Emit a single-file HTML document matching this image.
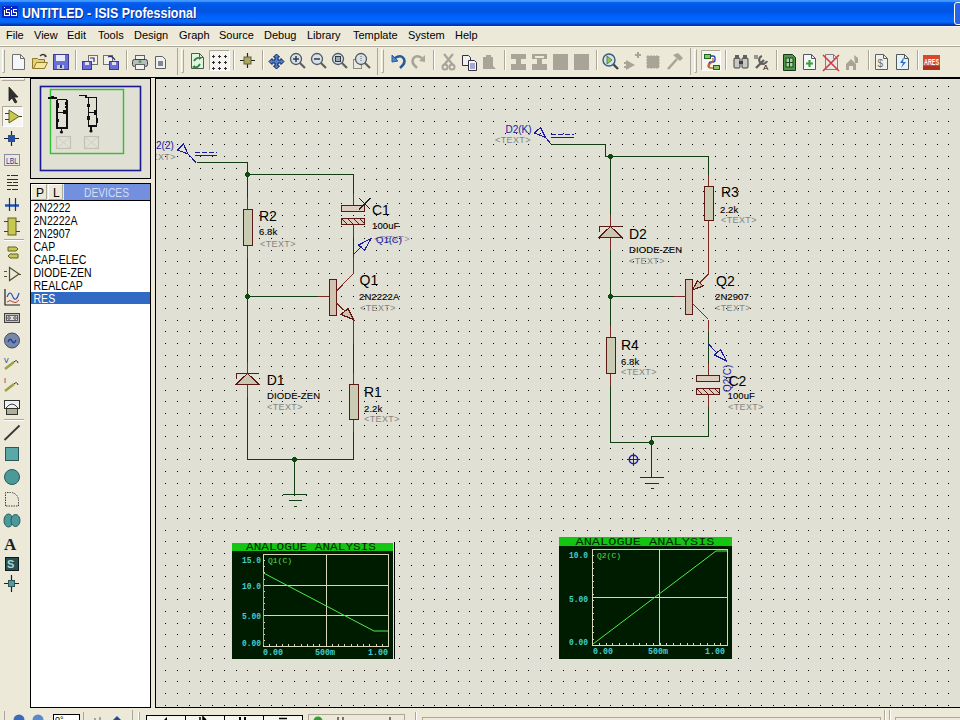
<!DOCTYPE html>
<html><head><meta charset="utf-8">
<style>
html,body{margin:0;padding:0;}
body{width:960px;height:720px;overflow:hidden;position:relative;background:#ECE9D8;font-family:"Liberation Sans",sans-serif;}
.a{position:absolute;}
svg{position:absolute;left:0;top:0;}
.mi{position:absolute;top:29px;font-size:11px;color:#000;line-height:13px;white-space:nowrap;}
</style></head><body>

<div class="a" style="left:0;top:0;width:960px;height:26px;background:linear-gradient(#4AA0FF 0px,#3A8CFF 1.5px,#0A62F0 2.5px,#0058E8 5px,#0054E2 11px,#005EF6 15px,#0066FF 19px,#0A68F6 22px,#0050D8 23.5px,#0034B0 25px,#0030A8 26px);"></div><div class="a" style="left:0;top:26px;width:960px;height:1px;background:#F4F6FA;"></div>
<svg width="20" height="20" style="left:0;top:0;"><rect x="2" y="6" width="16" height="12" fill="#1024C0"/><path d="M4.5 7 v1.2 M4.5 9.5 V15.5 H9.5 V12.5 H6.5 V9.5 H10 M11.5 7 v1.2 M11.5 9.5 V15.5 H16.5 V12.5 H13.5 V9.5 H17" fill="none" stroke="#FFFFFF" stroke-width="1" shape-rendering="crispEdges"/></svg>
<div class="a" style="left:22px;top:5px;font:bold 14px/17px 'Liberation Sans', sans-serif;color:#fff;white-space:nowrap;text-shadow:1px 1px 0 #0A2A8A;transform:scaleX(0.89);transform-origin:0 0;">UNTITLED - ISIS Professional</div>
<div class="a" style="left:954px;top:2px;width:10px;height:21px;border:1px solid #fff;border-radius:3px;background:#2A63E8;"></div>
<div class="mi" style="left:6px;">File</div>
<div class="mi" style="left:34px;">View</div>
<div class="mi" style="left:67px;">Edit</div>
<div class="mi" style="left:98px;">Tools</div>
<div class="mi" style="left:134px;">Design</div>
<div class="mi" style="left:179px;">Graph</div>
<div class="mi" style="left:219px;">Source</div>
<div class="mi" style="left:264px;">Debug</div>
<div class="mi" style="left:307px;">Library</div>
<div class="mi" style="left:353px;">Template</div>
<div class="mi" style="left:408px;">System</div>
<div class="mi" style="left:455px;">Help</div>
<div class="a" style="left:0;top:45px;width:960px;height:1px;background:#fff;"></div>
<div class="a" style="left:0;top:46px;width:960px;height:1px;background:#ACA899;"></div>
<div class="a" style="left:155px;top:78px;width:805px;height:630px;background:#E0E0D4;"></div>
<div class="a" style="left:30px;top:183px;width:119px;height:523px;background:#fff;border:1px solid #000;"></div>
<div class="a" style="left:30px;top:78px;width:119px;height:99px;background:#E0E0D4;border:1px solid #000;"></div>
<svg width="960" height="720" viewBox="0 0 960 720" shape-rendering="crispEdges">
<defs><path id="dr" d="M165 0.5h1m11 0h1m11 0h1m10 0h1m11 0h1m11 0h1m11 0h1m10 0h1m11 0h1m11 0h1m10 0h1m11 0h1m11 0h1m11 0h1m10 0h1m11 0h1m11 0h1m10 0h1m11 0h1m10 0h1m11 0h1m11 0h1m11 0h1m10 0h1m11 0h1m11 0h1m10 0h1m11 0h1m11 0h1m11 0h1m10 0h1m11 0h1m11 0h1m10 0h1m11 0h1m11 0h1m11 0h1m11 0h1m10 0h1m11 0h1m10 0h1m11 0h1m11 0h1m10 0h1m11 0h1m11 0h1m10 0h1m11 0h1m10 0h1m11 0h1m11 0h1m10 0h1m11 0h1m10 0h1m11 0h1m11 0h1m11 0h1m11 0h1m10 0h1m11 0h1m11 0h1m11 0h1m10 0h1m11 0h1m10 0h1m11 0h1m11 0h1m10 0h1" stroke="#000" stroke-width="1"/><clipPath id="sc"><rect x="156" y="79" width="804" height="628"/></clipPath></defs>
<use href="#dr" y="86"/>
<use href="#dr" y="98"/>
<use href="#dr" y="109"/>
<use href="#dr" y="121"/>
<use href="#dr" y="133"/>
<use href="#dr" y="144"/>
<use href="#dr" y="156"/>
<use href="#dr" y="168"/>
<use href="#dr" y="179"/>
<use href="#dr" y="191"/>
<use href="#dr" y="203"/>
<use href="#dr" y="215"/>
<use href="#dr" y="226"/>
<use href="#dr" y="238"/>
<use href="#dr" y="250"/>
<use href="#dr" y="261"/>
<use href="#dr" y="273"/>
<use href="#dr" y="285"/>
<use href="#dr" y="296"/>
<use href="#dr" y="308"/>
<use href="#dr" y="320"/>
<use href="#dr" y="331"/>
<use href="#dr" y="343"/>
<use href="#dr" y="355"/>
<use href="#dr" y="366"/>
<use href="#dr" y="378"/>
<use href="#dr" y="390"/>
<use href="#dr" y="401"/>
<use href="#dr" y="413"/>
<use href="#dr" y="425"/>
<use href="#dr" y="436"/>
<use href="#dr" y="448"/>
<use href="#dr" y="459"/>
<use href="#dr" y="471"/>
<use href="#dr" y="483"/>
<use href="#dr" y="495"/>
<use href="#dr" y="506"/>
<use href="#dr" y="518"/>
<use href="#dr" y="530"/>
<use href="#dr" y="541"/>
<use href="#dr" y="553"/>
<use href="#dr" y="565"/>
<use href="#dr" y="576"/>
<use href="#dr" y="588"/>
<use href="#dr" y="599"/>
<use href="#dr" y="611"/>
<use href="#dr" y="623"/>
<use href="#dr" y="634"/>
<use href="#dr" y="646"/>
<use href="#dr" y="658"/>
<use href="#dr" y="670"/>
<use href="#dr" y="681"/>
<use href="#dr" y="693"/>
<use href="#dr" y="705"/>
<g clip-path="url(#sc)"><g font-family="'Liberation Sans', sans-serif">
<path d="M196.5 162.5 L247.5 162.5 L247.5 197.5" fill="none" stroke="#123C12" stroke-width="1"/>
<path d="M247.5 197.5 L247.5 209.5" fill="none" stroke="#7A2A20" stroke-width="1"/>
<path d="M247.5 245.5 L247.5 257.5" fill="none" stroke="#7A2A20" stroke-width="1"/>
<rect x="243.0" y="209.5" width="9.5" height="36" fill="#C9CBB2" stroke="#5C1812" stroke-width="1"/>
<path d="M247.5 257.5 L247.5 361.5" fill="none" stroke="#123C12" stroke-width="1"/>
<path d="M247.5 361.5 L247.5 373.5" fill="none" stroke="#7A2A20" stroke-width="1"/>
<path d="M247.5 384.5 L247.5 396.5" fill="none" stroke="#7A2A20" stroke-width="1"/>
<polygon points="247.5,373.5 236,384.5 259,384.5" fill="#CAC6B2" stroke="#5C1812" stroke-width="1.2"/>
<path d="M236.5 379 V373.5 H259" fill="none" stroke="#5C1812" stroke-width="1.2"/>
<path d="M247.5 396.5 L247.5 459.5 L353.5 459.5 L353.5 431.5" fill="none" stroke="#123C12" stroke-width="1"/>
<circle cx="247.5" cy="174.5" r="2.6" fill="#0E4A0E"/>
<circle cx="247.5" cy="296.5" r="2.6" fill="#0E4A0E"/>
<circle cx="294.5" cy="459.5" r="2.6" fill="#0E4A0E"/>
<path d="M294.5 459.5 L294.5 494.5" fill="none" stroke="#123C12" stroke-width="1"/>
<path d="M282.5 494.5 L306.5 494.5" fill="none" stroke="#123C12" stroke-width="1"/>
<path d="M288.5 500.5 L301.5 500.5" fill="none" stroke="#123C12" stroke-width="1"/>
<path d="M293.5 506.5 L296.5 506.5" fill="none" stroke="#123C12" stroke-width="1"/>
<path d="M247.5 174.5 L353.5 174.5 L353.5 193.5" fill="none" stroke="#123C12" stroke-width="1"/>
<path d="M353.5 193.5 L353.5 205.5" fill="none" stroke="#7A2A20" stroke-width="1"/>
<path d="M353.5 224.5 L353.5 236.5" fill="none" stroke="#7A2A20" stroke-width="1"/>
<rect x="341.5" y="205.5" width="23" height="6" fill="#DCCDBE" stroke="#5C1812" stroke-width="1"/>
<rect x="341.5" y="218.5" width="23" height="6" fill="#DCCDBE" stroke="#5C1812" stroke-width="1"/>
<line x1="342" y1="219" x2="347" y2="224" stroke="#5C1812" stroke-width="1"/>
<line x1="348" y1="219" x2="353" y2="224" stroke="#5C1812" stroke-width="1"/>
<line x1="354" y1="219" x2="359" y2="224" stroke="#5C1812" stroke-width="1"/>
<line x1="360" y1="219" x2="365" y2="224" stroke="#5C1812" stroke-width="1"/>
<path d="M353.5 236.5 L353.5 256.5" fill="none" stroke="#123C12" stroke-width="1"/>
<path d="M353.5 256.5 L353.5 273.5" fill="none" stroke="#7A2A20" stroke-width="1"/>
<path d="M247.5 296.5 L317.5 296.5" fill="none" stroke="#123C12" stroke-width="1"/>
<path d="M317.5 296.5 L329.5 296.5" fill="none" stroke="#7A2A20" stroke-width="1"/>
<rect x="329.5" y="279.5" width="7" height="36" fill="#D2C2B0" stroke="#5C1812" stroke-width="1"/>
<line x1="336.5" y1="291" x2="353.5" y2="273.5" stroke="#7A2A20" stroke-width="1"/>
<line x1="336.5" y1="303" x2="353.5" y2="319.5" stroke="#7A2A20" stroke-width="1"/>
<polygon points="341,314.5 348,308.5 353.5,319.5" fill="#D2C2B0" stroke="#5C1812" stroke-width="1.2"/>
<path d="M353.5 319.5 L353.5 343.5" fill="none" stroke="#7A2A20" stroke-width="1"/>
<path d="M353.5 343.5 L353.5 372.5" fill="none" stroke="#123C12" stroke-width="1"/>
<path d="M353.5 372.5 L353.5 384.5" fill="none" stroke="#7A2A20" stroke-width="1"/>
<path d="M353.5 419.5 L353.5 431.5" fill="none" stroke="#7A2A20" stroke-width="1"/>
<rect x="349.0" y="384.5" width="9.5" height="35" fill="#C9CBB2" stroke="#5C1812" stroke-width="1"/>
<line x1="359" y1="198" x2="370.5" y2="209.5" stroke="#202020" stroke-width="1"/>
<line x1="370.5" y1="198" x2="359" y2="209.5" stroke="#202020" stroke-width="1"/>
<line x1="353.5" y1="254.5" x2="362" y2="246" stroke="#1A1AA0" stroke-width="1"/>
<polygon points="358.5,245 371,238.5 364.5,250.5" fill="none" stroke="#1A1AA0" stroke-width="1.1"/>
<polygon points="177.5,150 183.5,144 188,154" fill="none" stroke="#1A1AA0" stroke-width="1.1"/>
<line x1="188" y1="154" x2="196" y2="162.5" stroke="#1A1AA0" stroke-width="1"/>
<line x1="195" y1="152" x2="217" y2="152" stroke="#1A1AA0" stroke-dasharray="5,2" stroke-width="1"/>
<line x1="195" y1="155.5" x2="217" y2="155.5" stroke="#1A1AA0" stroke-width="1.2"/>
<text x="259" y="220.6" font-size="14" fill="#000" >R2</text>
<text x="259" y="234.5" font-size="9.5" fill="#000"  stroke="#000" stroke-width="0.12" letter-spacing="0.1">6.8k</text>
<text x="260" y="246.6" font-size="9" fill="#858585"  letter-spacing="0.4">&lt;TEXT&gt;</text>
<text x="372" y="215.2" font-size="14" fill="#000" >C1</text>
<text x="372" y="229.3" font-size="9.5" fill="#000"  stroke="#000" stroke-width="0.12" letter-spacing="0.1">100uF</text>
<text x="374" y="242.2" font-size="9" fill="#9090B0"  letter-spacing="0.4">&lt;TEXT&gt;</text>
<text x="376" y="242.5" font-size="9.5" fill="#1A1AA0" >Q1(C)</text>
<text x="359.5" y="285.3" font-size="14" fill="#000" >Q1</text>
<text x="359" y="299.9" font-size="9.5" fill="#000"  stroke="#000" stroke-width="0.12" letter-spacing="0.1">2N2222A</text>
<text x="360" y="311.2" font-size="9" fill="#858585"  letter-spacing="0.4">&lt;TEXT&gt;</text>
<text x="266.7" y="385.0" font-size="14" fill="#000" >D1</text>
<text x="267" y="399.0" font-size="9.5" fill="#000"  stroke="#000" stroke-width="0.12" letter-spacing="0.1">DIODE-ZEN</text>
<text x="267" y="410.2" font-size="9" fill="#858585"  letter-spacing="0.4">&lt;TEXT&gt;</text>
<text x="364" y="396.9" font-size="14" fill="#000" >R1</text>
<text x="364" y="411.5" font-size="9.5" fill="#000"  stroke="#000" stroke-width="0.12" letter-spacing="0.1">2.2k</text>
<text x="364" y="421.6" font-size="9" fill="#858585"  letter-spacing="0.4">&lt;TEXT&gt;</text>
<text x="156" y="149.4" font-size="10" fill="#1A1AA0" >2(2)</text>
<text x="140" y="159.9" font-size="9" fill="#858585"  letter-spacing="0.4">&lt;TEXT&gt;</text>
<path d="M551.5 144.5 L605.5 144.5 L605.5 156.5 L708.5 156.5 L708.5 174.5" fill="none" stroke="#123C12" stroke-width="1"/>
<path d="M708.5 174.5 L708.5 186.5" fill="none" stroke="#7A2A20" stroke-width="1"/>
<path d="M708.5 220.5 L708.5 232.5" fill="none" stroke="#7A2A20" stroke-width="1"/>
<rect x="704.0" y="186.5" width="9.5" height="34" fill="#C9CBB2" stroke="#5C1812" stroke-width="1"/>
<path d="M708.5 232.5 L708.5 274.5" fill="none" stroke="#7A2A20" stroke-width="1"/>
<line x1="708.5" y1="274" x2="692.5" y2="290" stroke="#7A2A20" stroke-width="1"/>
<polygon points="692.5,290 697.5,280.5 703,286" fill="#D2C2B0" stroke="#5C1812" stroke-width="1.2"/>
<rect x="685.5" y="279.5" width="7" height="35" fill="#D2C2B0" stroke="#5C1812" stroke-width="1"/>
<line x1="692.5" y1="303.5" x2="708.5" y2="319.5" stroke="#7A2A20" stroke-width="1"/>
<path d="M708.5 319.5 L708.5 331.5" fill="none" stroke="#7A2A20" stroke-width="1"/>
<path d="M708.5 331.5 L708.5 363.5" fill="none" stroke="#123C12" stroke-width="1"/>
<path d="M708.5 363.5 L708.5 375.5" fill="none" stroke="#7A2A20" stroke-width="1"/>
<path d="M708.5 394.5 L708.5 406.5" fill="none" stroke="#7A2A20" stroke-width="1"/>
<rect x="696.5" y="375.5" width="23" height="6" fill="#DCCDBE" stroke="#5C1812" stroke-width="1"/>
<rect x="696.5" y="388.5" width="23" height="6" fill="#DCCDBE" stroke="#5C1812" stroke-width="1"/>
<line x1="697" y1="389" x2="702" y2="394" stroke="#5C1812" stroke-width="1"/>
<line x1="703" y1="389" x2="708" y2="394" stroke="#5C1812" stroke-width="1"/>
<line x1="709" y1="389" x2="714" y2="394" stroke="#5C1812" stroke-width="1"/>
<line x1="715" y1="389" x2="720" y2="394" stroke="#5C1812" stroke-width="1"/>
<path d="M708.5 406.5 L708.5 436.5 L651.5 436.5 L651.5 442.5" fill="none" stroke="#123C12" stroke-width="1"/>
<path d="M610.5 156.5 L610.5 214.5" fill="none" stroke="#123C12" stroke-width="1"/>
<path d="M610.5 214.5 L610.5 226.5" fill="none" stroke="#7A2A20" stroke-width="1"/>
<path d="M610.5 237.5 L610.5 249.5" fill="none" stroke="#7A2A20" stroke-width="1"/>
<polygon points="610.5,226.5 599,237.5 622,237.5" fill="#CAC6B2" stroke="#5C1812" stroke-width="1.2"/>
<path d="M599.5 232 V226.5 H622" fill="none" stroke="#5C1812" stroke-width="1.2"/>
<path d="M610.5 249.5 L610.5 325.5" fill="none" stroke="#123C12" stroke-width="1"/>
<path d="M610.5 296.5 L673.5 296.5" fill="none" stroke="#123C12" stroke-width="1"/>
<path d="M673.5 296.5 L685.5 296.5" fill="none" stroke="#7A2A20" stroke-width="1"/>
<path d="M610.5 325.5 L610.5 337.5" fill="none" stroke="#7A2A20" stroke-width="1"/>
<path d="M610.5 373.5 L610.5 385.5" fill="none" stroke="#7A2A20" stroke-width="1"/>
<rect x="606.0" y="337.5" width="9.5" height="36" fill="#C9CBB2" stroke="#5C1812" stroke-width="1"/>
<path d="M610.5 385.5 L610.5 442.5 L651.5 442.5" fill="none" stroke="#123C12" stroke-width="1"/>
<circle cx="610.5" cy="156.5" r="2.6" fill="#0E4A0E"/>
<circle cx="610.5" cy="296.5" r="2.6" fill="#0E4A0E"/>
<circle cx="651.5" cy="442.5" r="2.6" fill="#0E4A0E"/>
<path d="M651.5 442.5 L651.5 477.5" fill="none" stroke="#123C12" stroke-width="1"/>
<path d="M639.5 477.5 L663.5 477.5" fill="none" stroke="#123C12" stroke-width="1"/>
<path d="M645.5 483.5 L658.5 483.5" fill="none" stroke="#123C12" stroke-width="1"/>
<path d="M650.5 488.5 L653.5 488.5" fill="none" stroke="#123C12" stroke-width="1"/>
<circle cx="633.5" cy="459.5" r="4.2" fill="none" stroke="#1A1AA0" stroke-width="1.5" shape-rendering="auto"/>
<line x1="627" y1="459.5" x2="640" y2="459.5" stroke="#1A1AA0" stroke-width="1"/>
<line x1="633.5" y1="453" x2="633.5" y2="466" stroke="#1A1AA0" stroke-width="1"/>
<polygon points="534.5,133 540.5,127.5 545.5,137.5" fill="none" stroke="#1A1AA0" stroke-width="1.1"/>
<line x1="545.5" y1="137.5" x2="551.5" y2="144.5" stroke="#1A1AA0" stroke-width="1"/>
<line x1="551" y1="134.5" x2="574" y2="134.5" stroke="#1A1AA0" stroke-dasharray="5,2" stroke-width="1"/>
<line x1="551" y1="137.5" x2="574" y2="137.5" stroke="#1A1AA0" stroke-width="1.2"/>
<line x1="708.5" y1="344" x2="716" y2="352" stroke="#1A1AA0" stroke-width="1"/>
<polygon points="714.5,355 720.5,349.5 726.5,361" fill="none" stroke="#1A1AA0" stroke-width="1.1"/>
<text transform="translate(731,392) rotate(-90)" font-size="10" fill="#1A1AA0">Q2(C)</text>
<text x="505.5" y="132.5" font-size="10" fill="#1A1AA0" >D2(K)</text>
<text x="495" y="142.9" font-size="9" fill="#858585"  letter-spacing="0.4">&lt;TEXT&gt;</text>
<text x="721" y="197.1" font-size="14" fill="#000" >R3</text>
<text x="720" y="212.5" font-size="9.5" fill="#000"  stroke="#000" stroke-width="0.12" letter-spacing="0.1">2.2k</text>
<text x="721" y="223.4" font-size="9" fill="#858585"  letter-spacing="0.4">&lt;TEXT&gt;</text>
<text x="629" y="238.6" font-size="14" fill="#000" >D2</text>
<text x="629" y="252.8" font-size="9.5" fill="#000"  stroke="#000" stroke-width="0.12" letter-spacing="0.1">DIODE-ZEN</text>
<text x="629" y="264.0" font-size="9" fill="#858585"  letter-spacing="0.4">&lt;TEXT&gt;</text>
<text x="716" y="285.6" font-size="14" fill="#000" >Q2</text>
<text x="715" y="300.1" font-size="9.5" fill="#000"  stroke="#000" stroke-width="0.12" letter-spacing="0.1">2N2907</text>
<text x="715" y="310.7" font-size="9" fill="#858585"  letter-spacing="0.4">&lt;TEXT&gt;</text>
<text x="621" y="349.6" font-size="14" fill="#000" >R4</text>
<text x="621" y="364.5" font-size="9.5" fill="#000"  stroke="#000" stroke-width="0.12" letter-spacing="0.1">6.8k</text>
<text x="621" y="375.2" font-size="9" fill="#858585"  letter-spacing="0.4">&lt;TEXT&gt;</text>
<text x="728.5" y="385.6" font-size="14" fill="#000" >C2</text>
<text x="727.5" y="399.2" font-size="9.5" fill="#000"  stroke="#000" stroke-width="0.12" letter-spacing="0.1">100uF</text>
<text x="728" y="409.8" font-size="9" fill="#858585"  letter-spacing="0.4">&lt;TEXT&gt;</text>
</g>
<rect x="232" y="536" width="164" height="7" fill="#E0E0D4"/>
<rect x="232" y="543" width="161" height="116" fill="#001C00"/>
<rect x="232" y="543" width="161" height="8" fill="#12C612"/>
<line x1="394.5" y1="542" x2="394.5" y2="659" stroke="#000" stroke-width="1.5"/>
<rect x="263.5" y="554.5" width="125" height="92" fill="none" stroke="#D8D8B8" stroke-width="1"/>
<line x1="263" y1="585.5" x2="388" y2="585.5" stroke="#D8D8B8" stroke-width="1"/>
<line x1="263" y1="615.5" x2="388" y2="615.5" stroke="#D8D8B8" stroke-width="1"/>
<line x1="326.5" y1="554" x2="326.5" y2="646" stroke="#D8D8B8" stroke-width="1"/>
<line x1="263.5" y1="644" x2="263.5" y2="646" stroke="#D8D8B8" stroke-width="1"/>
<line x1="269.8" y1="644" x2="269.8" y2="646" stroke="#D8D8B8" stroke-width="1"/>
<line x1="276.0" y1="644" x2="276.0" y2="646" stroke="#D8D8B8" stroke-width="1"/>
<line x1="282.2" y1="644" x2="282.2" y2="646" stroke="#D8D8B8" stroke-width="1"/>
<line x1="288.5" y1="644" x2="288.5" y2="646" stroke="#D8D8B8" stroke-width="1"/>
<line x1="294.8" y1="644" x2="294.8" y2="646" stroke="#D8D8B8" stroke-width="1"/>
<line x1="301.0" y1="644" x2="301.0" y2="646" stroke="#D8D8B8" stroke-width="1"/>
<line x1="307.2" y1="644" x2="307.2" y2="646" stroke="#D8D8B8" stroke-width="1"/>
<line x1="313.5" y1="644" x2="313.5" y2="646" stroke="#D8D8B8" stroke-width="1"/>
<line x1="319.8" y1="644" x2="319.8" y2="646" stroke="#D8D8B8" stroke-width="1"/>
<line x1="326.0" y1="644" x2="326.0" y2="646" stroke="#D8D8B8" stroke-width="1"/>
<line x1="332.2" y1="644" x2="332.2" y2="646" stroke="#D8D8B8" stroke-width="1"/>
<line x1="338.5" y1="644" x2="338.5" y2="646" stroke="#D8D8B8" stroke-width="1"/>
<line x1="344.8" y1="644" x2="344.8" y2="646" stroke="#D8D8B8" stroke-width="1"/>
<line x1="351.0" y1="644" x2="351.0" y2="646" stroke="#D8D8B8" stroke-width="1"/>
<line x1="357.2" y1="644" x2="357.2" y2="646" stroke="#D8D8B8" stroke-width="1"/>
<line x1="363.5" y1="644" x2="363.5" y2="646" stroke="#D8D8B8" stroke-width="1"/>
<line x1="369.8" y1="644" x2="369.8" y2="646" stroke="#D8D8B8" stroke-width="1"/>
<line x1="376.0" y1="644" x2="376.0" y2="646" stroke="#D8D8B8" stroke-width="1"/>
<line x1="382.2" y1="644" x2="382.2" y2="646" stroke="#D8D8B8" stroke-width="1"/>
<line x1="388.5" y1="644" x2="388.5" y2="646" stroke="#D8D8B8" stroke-width="1"/>
<line x1="263" y1="554.5" x2="265" y2="554.5" stroke="#D8D8B8" stroke-width="1"/>
<line x1="263" y1="560.6" x2="265" y2="560.6" stroke="#D8D8B8" stroke-width="1"/>
<line x1="263" y1="566.8" x2="265" y2="566.8" stroke="#D8D8B8" stroke-width="1"/>
<line x1="263" y1="572.9" x2="265" y2="572.9" stroke="#D8D8B8" stroke-width="1"/>
<line x1="263" y1="579.0" x2="265" y2="579.0" stroke="#D8D8B8" stroke-width="1"/>
<line x1="263" y1="585.2" x2="265" y2="585.2" stroke="#D8D8B8" stroke-width="1"/>
<line x1="263" y1="591.3" x2="265" y2="591.3" stroke="#D8D8B8" stroke-width="1"/>
<line x1="263" y1="597.4" x2="265" y2="597.4" stroke="#D8D8B8" stroke-width="1"/>
<line x1="263" y1="603.6" x2="265" y2="603.6" stroke="#D8D8B8" stroke-width="1"/>
<line x1="263" y1="609.7" x2="265" y2="609.7" stroke="#D8D8B8" stroke-width="1"/>
<line x1="263" y1="615.8" x2="265" y2="615.8" stroke="#D8D8B8" stroke-width="1"/>
<line x1="263" y1="622.0" x2="265" y2="622.0" stroke="#D8D8B8" stroke-width="1"/>
<line x1="263" y1="628.1" x2="265" y2="628.1" stroke="#D8D8B8" stroke-width="1"/>
<line x1="263" y1="634.2" x2="265" y2="634.2" stroke="#D8D8B8" stroke-width="1"/>
<line x1="263" y1="640.4" x2="265" y2="640.4" stroke="#D8D8B8" stroke-width="1"/>
<line x1="263" y1="646.5" x2="265" y2="646.5" stroke="#D8D8B8" stroke-width="1"/>
<rect x="232" y="543" width="161" height="8" fill="#12C612"/>
<text x="246" y="550" font-family="'Liberation Mono', monospace" font-size="10" fill="#002800" textLength="130" lengthAdjust="spacingAndGlyphs">ANALOGUE ANALYSIS</text>
<text x="242" y="563" font-family="'Liberation Mono', monospace" font-size="9" font-weight="bold" fill="#40D0D0" textLength="19" lengthAdjust="spacingAndGlyphs">15.0</text>
<text x="242" y="589" font-family="'Liberation Mono', monospace" font-size="9" font-weight="bold" fill="#40D0D0" textLength="19" lengthAdjust="spacingAndGlyphs">10.0</text>
<text x="242" y="619" font-family="'Liberation Mono', monospace" font-size="9" font-weight="bold" fill="#40D0D0" textLength="19" lengthAdjust="spacingAndGlyphs">5.00</text>
<text x="242" y="646" font-family="'Liberation Mono', monospace" font-size="9" font-weight="bold" fill="#40D0D0" textLength="19" lengthAdjust="spacingAndGlyphs">0.00</text>
<text x="263" y="655" font-family="'Liberation Mono', monospace" font-size="9" font-weight="bold" fill="#40D0D0" textLength="20" lengthAdjust="spacingAndGlyphs">0.00</text>
<text x="315" y="655" font-family="'Liberation Mono', monospace" font-size="9" font-weight="bold" fill="#40D0D0" textLength="20" lengthAdjust="spacingAndGlyphs">500m</text>
<text x="368" y="655" font-family="'Liberation Mono', monospace" font-size="9" font-weight="bold" fill="#40D0D0" textLength="20" lengthAdjust="spacingAndGlyphs">1.00</text>
<text x="268" y="563" font-family="'Liberation Mono', monospace" font-size="8" fill="#50E050" textLength="24" lengthAdjust="spacingAndGlyphs">Q1(C)</text>
<polyline points="263.5,645 263.5,573 374,631 388,631" fill="none" stroke="#48F048" stroke-width="1" shape-rendering="auto"/>
<rect x="559" y="537" width="173" height="122" fill="#001C00"/>
<rect x="559" y="537" width="173" height="8" fill="#12C612"/>
<rect x="592.5" y="549.5" width="135" height="96" fill="none" stroke="#D8D8B8" stroke-width="1"/>
<line x1="592" y1="597.5" x2="727" y2="597.5" stroke="#D8D8B8" stroke-width="1"/>
<line x1="659.5" y1="549" x2="659.5" y2="645" stroke="#D8D8B8" stroke-width="1"/>
<line x1="592.5" y1="643" x2="592.5" y2="645" stroke="#D8D8B8" stroke-width="1"/>
<line x1="599.2" y1="643" x2="599.2" y2="645" stroke="#D8D8B8" stroke-width="1"/>
<line x1="606.0" y1="643" x2="606.0" y2="645" stroke="#D8D8B8" stroke-width="1"/>
<line x1="612.8" y1="643" x2="612.8" y2="645" stroke="#D8D8B8" stroke-width="1"/>
<line x1="619.5" y1="643" x2="619.5" y2="645" stroke="#D8D8B8" stroke-width="1"/>
<line x1="626.2" y1="643" x2="626.2" y2="645" stroke="#D8D8B8" stroke-width="1"/>
<line x1="633.0" y1="643" x2="633.0" y2="645" stroke="#D8D8B8" stroke-width="1"/>
<line x1="639.8" y1="643" x2="639.8" y2="645" stroke="#D8D8B8" stroke-width="1"/>
<line x1="646.5" y1="643" x2="646.5" y2="645" stroke="#D8D8B8" stroke-width="1"/>
<line x1="653.2" y1="643" x2="653.2" y2="645" stroke="#D8D8B8" stroke-width="1"/>
<line x1="660.0" y1="643" x2="660.0" y2="645" stroke="#D8D8B8" stroke-width="1"/>
<line x1="666.8" y1="643" x2="666.8" y2="645" stroke="#D8D8B8" stroke-width="1"/>
<line x1="673.5" y1="643" x2="673.5" y2="645" stroke="#D8D8B8" stroke-width="1"/>
<line x1="680.2" y1="643" x2="680.2" y2="645" stroke="#D8D8B8" stroke-width="1"/>
<line x1="687.0" y1="643" x2="687.0" y2="645" stroke="#D8D8B8" stroke-width="1"/>
<line x1="693.8" y1="643" x2="693.8" y2="645" stroke="#D8D8B8" stroke-width="1"/>
<line x1="700.5" y1="643" x2="700.5" y2="645" stroke="#D8D8B8" stroke-width="1"/>
<line x1="707.2" y1="643" x2="707.2" y2="645" stroke="#D8D8B8" stroke-width="1"/>
<line x1="714.0" y1="643" x2="714.0" y2="645" stroke="#D8D8B8" stroke-width="1"/>
<line x1="720.8" y1="643" x2="720.8" y2="645" stroke="#D8D8B8" stroke-width="1"/>
<line x1="727.5" y1="643" x2="727.5" y2="645" stroke="#D8D8B8" stroke-width="1"/>
<line x1="592" y1="549.5" x2="594" y2="549.5" stroke="#D8D8B8" stroke-width="1"/>
<line x1="592" y1="555.9" x2="594" y2="555.9" stroke="#D8D8B8" stroke-width="1"/>
<line x1="592" y1="562.3" x2="594" y2="562.3" stroke="#D8D8B8" stroke-width="1"/>
<line x1="592" y1="568.7" x2="594" y2="568.7" stroke="#D8D8B8" stroke-width="1"/>
<line x1="592" y1="575.1" x2="594" y2="575.1" stroke="#D8D8B8" stroke-width="1"/>
<line x1="592" y1="581.5" x2="594" y2="581.5" stroke="#D8D8B8" stroke-width="1"/>
<line x1="592" y1="587.9" x2="594" y2="587.9" stroke="#D8D8B8" stroke-width="1"/>
<line x1="592" y1="594.3" x2="594" y2="594.3" stroke="#D8D8B8" stroke-width="1"/>
<line x1="592" y1="600.7" x2="594" y2="600.7" stroke="#D8D8B8" stroke-width="1"/>
<line x1="592" y1="607.1" x2="594" y2="607.1" stroke="#D8D8B8" stroke-width="1"/>
<line x1="592" y1="613.5" x2="594" y2="613.5" stroke="#D8D8B8" stroke-width="1"/>
<line x1="592" y1="619.9" x2="594" y2="619.9" stroke="#D8D8B8" stroke-width="1"/>
<line x1="592" y1="626.3" x2="594" y2="626.3" stroke="#D8D8B8" stroke-width="1"/>
<line x1="592" y1="632.7" x2="594" y2="632.7" stroke="#D8D8B8" stroke-width="1"/>
<line x1="592" y1="639.1" x2="594" y2="639.1" stroke="#D8D8B8" stroke-width="1"/>
<line x1="592" y1="645.5" x2="594" y2="645.5" stroke="#D8D8B8" stroke-width="1"/>
<rect x="559" y="537" width="173" height="9" fill="#12C612"/>
<text x="575.5" y="545" font-family="'Liberation Mono', monospace" font-size="10" fill="#002800" textLength="139" lengthAdjust="spacingAndGlyphs">ANALOGUE ANALYSIS</text>
<text x="569" y="558" font-family="'Liberation Mono', monospace" font-size="9" font-weight="bold" fill="#40D0D0" textLength="19" lengthAdjust="spacingAndGlyphs">10.0</text>
<text x="569" y="602" font-family="'Liberation Mono', monospace" font-size="9" font-weight="bold" fill="#40D0D0" textLength="19" lengthAdjust="spacingAndGlyphs">5.00</text>
<text x="569" y="645" font-family="'Liberation Mono', monospace" font-size="9" font-weight="bold" fill="#40D0D0" textLength="19" lengthAdjust="spacingAndGlyphs">0.00</text>
<text x="593" y="654" font-family="'Liberation Mono', monospace" font-size="9" font-weight="bold" fill="#40D0D0" textLength="20" lengthAdjust="spacingAndGlyphs">0.00</text>
<text x="648" y="654" font-family="'Liberation Mono', monospace" font-size="9" font-weight="bold" fill="#40D0D0" textLength="20" lengthAdjust="spacingAndGlyphs">500m</text>
<text x="705" y="654" font-family="'Liberation Mono', monospace" font-size="9" font-weight="bold" fill="#40D0D0" textLength="20" lengthAdjust="spacingAndGlyphs">1.00</text>
<text x="597" y="558" font-family="'Liberation Mono', monospace" font-size="8" fill="#50E050" textLength="24" lengthAdjust="spacingAndGlyphs">Q2(C)</text>
<polyline points="593,644 716,551 727,551" fill="none" stroke="#48F048" stroke-width="1" shape-rendering="auto"/></g>
<g shape-rendering="auto"><line x1="0" y1="77.5" x2="960" y2="77.5" stroke="#000" stroke-width="1"/>
<path d="M2.5 72.5 V49.5 H4.5" fill="none" stroke="#FFFFFF" stroke-width="1"/>
<path d="M4.5 49.5 V72.5 H2.5" fill="none" stroke="#ACA899" stroke-width="1"/>
<line x1="75.5" y1="50" x2="75.5" y2="70" stroke="#ACA899" stroke-width="1"/>
<line x1="76.5" y1="50" x2="76.5" y2="70" stroke="#FFFFFF" stroke-width="1"/>
<line x1="126.5" y1="50" x2="126.5" y2="70" stroke="#ACA899" stroke-width="1"/>
<line x1="127.5" y1="50" x2="127.5" y2="70" stroke="#FFFFFF" stroke-width="1"/>
<line x1="233.5" y1="50" x2="233.5" y2="70" stroke="#ACA899" stroke-width="1"/>
<line x1="234.5" y1="50" x2="234.5" y2="70" stroke="#FFFFFF" stroke-width="1"/>
<line x1="262.5" y1="50" x2="262.5" y2="70" stroke="#ACA899" stroke-width="1"/>
<line x1="263.5" y1="50" x2="263.5" y2="70" stroke="#FFFFFF" stroke-width="1"/>
<line x1="433.5" y1="50" x2="433.5" y2="70" stroke="#ACA899" stroke-width="1"/>
<line x1="434.5" y1="50" x2="434.5" y2="70" stroke="#FFFFFF" stroke-width="1"/>
<line x1="504.5" y1="50" x2="504.5" y2="70" stroke="#ACA899" stroke-width="1"/>
<line x1="505.5" y1="50" x2="505.5" y2="70" stroke="#FFFFFF" stroke-width="1"/>
<line x1="596.5" y1="50" x2="596.5" y2="70" stroke="#ACA899" stroke-width="1"/>
<line x1="597.5" y1="50" x2="597.5" y2="70" stroke="#FFFFFF" stroke-width="1"/>
<line x1="725.5" y1="50" x2="725.5" y2="70" stroke="#ACA899" stroke-width="1"/>
<line x1="726.5" y1="50" x2="726.5" y2="70" stroke="#FFFFFF" stroke-width="1"/>
<line x1="776.5" y1="50" x2="776.5" y2="70" stroke="#ACA899" stroke-width="1"/>
<line x1="777.5" y1="50" x2="777.5" y2="70" stroke="#FFFFFF" stroke-width="1"/>
<line x1="868.5" y1="50" x2="868.5" y2="70" stroke="#ACA899" stroke-width="1"/>
<line x1="869.5" y1="50" x2="869.5" y2="70" stroke="#FFFFFF" stroke-width="1"/>
<line x1="917.5" y1="50" x2="917.5" y2="70" stroke="#ACA899" stroke-width="1"/>
<line x1="918.5" y1="50" x2="918.5" y2="70" stroke="#FFFFFF" stroke-width="1"/>
<line x1="177.5" y1="48" x2="177.5" y2="75" stroke="#ACA899" stroke-width="1"/>
<line x1="377.5" y1="48" x2="377.5" y2="75" stroke="#ACA899" stroke-width="1"/>
<line x1="690.5" y1="48" x2="690.5" y2="75" stroke="#ACA899" stroke-width="1"/>
<path d="M181.5 72.5 V49.5 H183.5" fill="none" stroke="#FFFFFF" stroke-width="1"/>
<path d="M183.5 49.5 V72.5 H181.5" fill="none" stroke="#ACA899" stroke-width="1"/>
<path d="M381.5 72.5 V49.5 H383.5" fill="none" stroke="#FFFFFF" stroke-width="1"/>
<path d="M383.5 49.5 V72.5 H381.5" fill="none" stroke="#ACA899" stroke-width="1"/>
<path d="M694.5 72.5 V49.5 H696.5" fill="none" stroke="#FFFFFF" stroke-width="1"/>
<path d="M696.5 49.5 V72.5 H694.5" fill="none" stroke="#ACA899" stroke-width="1"/>
<rect x="209" y="50" width="21" height="21" fill="#F6F5F0"/>
<path d="M209.5 70.5 V50.5 H229.5" fill="none" stroke="#ACA899" stroke-width="1"/>
<path d="M209.5 70.5 H229.5 V50.5" fill="none" stroke="#FFFFFF" stroke-width="1"/>
<rect x="701" y="50" width="20" height="21" fill="#F6F5F0"/>
<path d="M701.5 70.5 V50.5 H720.5" fill="none" stroke="#ACA899" stroke-width="1"/>
<path d="M701.5 70.5 H720.5 V50.5" fill="none" stroke="#FFFFFF" stroke-width="1"/>
<path d="M12.5 54.5 h8 l4 4 v11 h-12 z" fill="#F4F6FA" stroke="#6E6E6E" stroke-width="1"/><path d="M20.5 54.5 v4 h4" fill="none" stroke="#6E6E6E"/>
<path d="M32.5 58.5 h5 l1 1 h6 v9 h-12 z" fill="#E8D070" stroke="#8C7A30"/><path d="M33.5 68.5 l3 -6 h11 l-3 6 z" fill="#F6E49A" stroke="#8C7A30"/><path d="M40 56 q3 -3 6 0" fill="none" stroke="#303030" stroke-width="1.3"/><path d="M45 54.5 l2 2 l-2.5 1z" fill="#303030"/>
<rect x="53.5" y="54.5" width="15" height="15" fill="#6A6ED8" stroke="#3A3A90"/><rect x="56" y="55" width="9" height="6" fill="#E8EAF4"/><rect x="57" y="65" width="7" height="4" fill="#C8CAE0"/><rect x="60" y="65" width="2" height="3" fill="#3A3A90"/>
<rect x="88.5" y="55.5" width="9" height="9" fill="#F2F0E8" stroke="#707070"/><rect x="82.5" y="61.5" width="9" height="8" fill="#6A6ED8" stroke="#3A3A90"/><rect x="85" y="62" width="4" height="3" fill="#E0E0F0"/><path d="M90 58 l4 0 l0 4" fill="none" stroke="#2A2A80" stroke-width="1.2"/>
<rect x="103.5" y="55.5" width="9" height="9" fill="#F2F0E8" stroke="#707070"/><rect x="109.5" y="61.5" width="9" height="8" fill="#6A6ED8" stroke="#3A3A90"/><rect x="112" y="62" width="4" height="3" fill="#E0E0F0"/><path d="M108 57 q4 -2 7 3" fill="none" stroke="#2A2A80" stroke-width="1.2"/>
<rect x="135.5" y="55.5" width="9" height="5" fill="#F0F0F0" stroke="#606060"/><rect x="132.5" y="59.5" width="15" height="7" rx="2" fill="#B8BCC0" stroke="#404040"/><rect x="135.5" y="64.5" width="9" height="5" fill="#F4F4F4" stroke="#606060"/><circle cx="140" cy="61.5" r="1.5" fill="#50A050"/>
<path d="M155.5 56.5 h7 l3 3 v9 h-10 z" fill="#F0F0F0" stroke="#606060"/><rect x="158" y="61" width="5" height="5" fill="#808890"/>
<path d="M191.5 53.5 h8 l4 4 v11 h-12 z" fill="#E4F2E4" stroke="#505850" stroke-width="1"/><path d="M199.5 53.5 v4 h4" fill="none" stroke="#505850"/><path d="M194 61 q2 -4 6 -3 M200 64 q-2 4 -6 3" fill="none" stroke="#2E8A3A" stroke-width="1.8"/><path d="M199 56 l3 2 l-3 2z M195 69 l-3 -2 l3 -2z" fill="#2E8A3A"/>
<path d="M212.0 56.5 h3 M213.5 55.0 v3" stroke="#303030" stroke-width="1"/><path d="M212.0 62.5 h3 M213.5 61.0 v3" stroke="#303030" stroke-width="1"/><path d="M212.0 68.5 h3 M213.5 67.0 v3" stroke="#303030" stroke-width="1"/><path d="M218.0 56.5 h3 M219.5 55.0 v3" stroke="#303030" stroke-width="1"/><path d="M218.0 62.5 h3 M219.5 61.0 v3" stroke="#303030" stroke-width="1"/><path d="M218.0 68.5 h3 M219.5 67.0 v3" stroke="#303030" stroke-width="1"/><path d="M224.0 56.5 h3 M225.5 55.0 v3" stroke="#303030" stroke-width="1"/><path d="M224.0 62.5 h3 M225.5 61.0 v3" stroke="#303030" stroke-width="1"/><path d="M224.0 68.5 h3 M225.5 67.0 v3" stroke="#303030" stroke-width="1"/>
<path d="M240 60.5 h15 M247.5 53 v15" stroke="#202020" stroke-width="1.2"/><rect x="244" y="57" width="7" height="7" fill="#A8A860" stroke="#606030"/>
<path d="M276.5 54 L279.5 57 H278 V60 H281 V58.5 L284 61.5 L281 64.5 V63 H278 V66 H279.5 L276.5 69 L273.5 66 H275 V63 H272 V64.5 L269 61.5 L272 58.5 V60 H275 V57 H273.5 Z" fill="#4A84D8" stroke="#0A2050" stroke-width="1"/>
<line x1="299.5" y1="62.5" x2="305" y2="68" stroke="#606060" stroke-width="2.2"/><circle cx="296" cy="59" r="5.5" fill="#D8E0E8" stroke="#505860" stroke-width="1.3"/><path d="M293 59 h6 M296 56 v6" stroke="#2A3A50" stroke-width="1.5"/>
<line x1="320.5" y1="62.5" x2="326" y2="68" stroke="#606060" stroke-width="2.2"/><circle cx="317" cy="59" r="5.5" fill="#D8E0E8" stroke="#505860" stroke-width="1.3"/><path d="M314 59 h6" stroke="#2A3A50" stroke-width="1.5"/>
<line x1="341.5" y1="62.5" x2="347" y2="68" stroke="#606060" stroke-width="2.2"/><circle cx="338" cy="59" r="5.5" fill="#D8E0E8" stroke="#505860" stroke-width="1.3"/><rect x="335.5" y="56.5" width="5" height="5" fill="#A0A8B0" stroke="#2A3A50"/>
<rect x="353.5" y="59.5" width="8" height="9" fill="none" stroke="#303030" stroke-dasharray="1,1"/><line x1="364.5" y1="62.5" x2="370" y2="68" stroke="#606060" stroke-width="2.2"/><circle cx="361" cy="59" r="5.5" fill="#D8E0E8" stroke="#505860" stroke-width="1.3"/><path d="M361 56 v6" stroke="#606060" stroke-dasharray="1,1"/>
<path d="M395 58 q6 -4 9 1 q2 4 -4 9" fill="none" stroke="#2A5A9A" stroke-width="2.6"/><path d="M392 55 l0 7 l6 -1 z" fill="#4A88D8" stroke="#2A5A9A"/>
<path d="M422 58 q-6 -4 -9 1 q-2 4 4 9" fill="none" stroke="#A8A497" stroke-width="2.6"/><path d="M425 55 l0 7 l-6 -1 z" fill="#A8A497"/>
<path d="M444 54 l9 11 M453 54 l-9 11" stroke="#A8A497" stroke-width="2.2"/><circle cx="445" cy="67" r="2.5" fill="none" stroke="#A8A497" stroke-width="2"/><circle cx="452" cy="67" r="2.5" fill="none" stroke="#A8A497" stroke-width="2"/>
<path d="M462.5 55.5 h6 l2 2 v8 h-8z" fill="#F0F0F0" stroke="#303040"/><path d="M468.5 60.5 h6 l2 2 v8 h-8z" fill="#F4F4FA" stroke="#303040"/><path d="M470 64 h5 M470 66 h5 M470 68 h5" stroke="#5060A0"/>
<path d="M483 57 h10 v9 l3 3 h-13 z" fill="#A8A497"/><rect x="486" y="55" width="5" height="3" fill="#A8A497"/>
<path d="M511 54 h15 v5 h-5 v5 h5 v6 h-15 v-6 h5 v-5 h-5 z" fill="#A8A497"/>
<path d="M532 54 h15 v5 h-5 l0 2 l0 3 h5 v6 h-15 v-6 h5 v-5 h-5 z" fill="#A8A497"/><rect x="535" y="56" width="9" height="2" fill="#ECE9D8"/>
<rect x="553" y="54" width="15" height="16" fill="#A8A497"/>
<rect x="574" y="54" width="15" height="16" fill="#A8A497"/>
<line x1="613" y1="64" x2="618" y2="69" stroke="#404850" stroke-width="2.4"/><circle cx="609" cy="60" r="6" fill="#D0E4F0" stroke="#3A5A78" stroke-width="1.4"/><path d="M607 56 l5 4 l-5 4 z" fill="#90C850" stroke="#507030" stroke-width="0.8"/>
<path d="M626 60 l9 5 l-9 5 z" fill="#A8A497"/><path d="M624 63 h3 M624 67 h3 M635 55 h6 M638 52 v6" stroke="#A8A497" stroke-width="2"/>
<rect x="647" y="56" width="12" height="12" fill="#A8A497"/><path d="M646 57 h14 M646 60 h14 M646 63 h14 M646 66 h14 M648 55 v14 M651 55 v14 M654 55 v14 M657 55 v14" stroke="#A8A497" stroke-width="1"/>
<path d="M668 69 l9 -10" stroke="#A8A497" stroke-width="2.6"/><path d="M673 55 l5 -2 l5 5 l-3 3 z" fill="#A8A497"/>
<rect x="704.5" y="54.5" width="6" height="4" fill="#8CC860" stroke="#206020"/><rect x="713.5" y="65.5" width="6" height="4" fill="#8CC860" stroke="#206020"/><path d="M710 56 h3 q2 0 2 2 v2 q0 2 -2 2 h-2 q-2 0 -2 2 v3" fill="none" stroke="#2040B0" stroke-width="1.3"/><path d="M713 58 v3 l-3 3 q-2 0 -2 2 q0 2 3 2 h2" fill="none" stroke="#D06020" stroke-width="1.3"/>
<rect x="734" y="58" width="6" height="10" rx="1" fill="#C8C8C8" stroke="#404040"/><rect x="742" y="58" width="6" height="10" rx="1" fill="#C8C8C8" stroke="#404040"/><rect x="735" y="55" width="4" height="4" fill="#606060"/><rect x="743" y="55" width="4" height="4" fill="#606060"/><rect x="739" y="61" width="4" height="3" fill="#404040"/>
<path d="M754 56 h4 M754 58 h4" stroke="#404040"/><path d="M756 68 l8 -8" stroke="#606060" stroke-width="2.4"/><path d="M762 56 a4 4 0 1 0 5 5" fill="none" stroke="#606060" stroke-width="2.2"/><text x="763" y="70" font-size="8" font-family="'Liberation Sans'" fill="#202020">A</text>
<path d="M783.5 54.5 h9 l3 3 v13 h-12 z" fill="#4A9A4A" stroke="#203020"/><rect x="786" y="58" width="7" height="9" fill="#A8D8A0" stroke="#204020"/><path d="M789.5 58 v9 M786 62.5 h7" stroke="#204020"/>
<path d="M803.5 54.5 h8 l4 4 v11 h-12 z" fill="#F4F6FA" stroke="#505860" stroke-width="1"/><path d="M811.5 54.5 v4 h4" fill="none" stroke="#505860"/><path d="M806 63.5 h7 M809.5 60 v7" stroke="#3AA03A" stroke-width="2.2"/>
<path d="M825.5 54.5 h8 l4 4 v11 h-12 z" fill="#E8E8E8" stroke="#808080" stroke-width="1"/><path d="M833.5 54.5 v4 h4" fill="none" stroke="#808080"/><path d="M823 55 l16 16 M839 55 l-16 16" stroke="#D03A3A" stroke-width="1.6"/>
<path d="M846 70 v-6 l5 -5 l5 5 v6 h-3 v-4 h-4 v4 z" fill="#A8A497"/><path d="M854 55 l4 3 v5 l-3 0 z" fill="#A8A497"/>
<path d="M875.5 54.5 h8 l4 4 v11 h-12 z" fill="#F0F0EA" stroke="#606060" stroke-width="1"/><path d="M883.5 54.5 v4 h4" fill="none" stroke="#606060"/><text x="877.5" y="67" font-size="10" font-family="'Liberation Sans'" fill="#707050">$</text>
<path d="M896.5 54.5 h8 l4 4 v11 h-12 z" fill="#E8F0F8" stroke="#505860" stroke-width="1"/><path d="M904.5 54.5 v4 h4" fill="none" stroke="#505860"/><path d="M904 57 l-4 6 h3 l-2 5 l5 -6 h-3 z" fill="#2A70D0"/>
<rect x="923" y="55" width="17" height="15" fill="#D8482A"/><rect x="923" y="66" width="17" height="4" fill="#B0301A"/><text x="924" y="65" font-size="9" font-weight="bold" font-family="'Liberation Sans'" fill="#FFFFFF" textLength="15" lengthAdjust="spacingAndGlyphs">ARES</text>
<path d="M1.5 80.5 V78.5 H24.5" fill="none" stroke="#FFFFFF"/><path d="M24.5 78.5 V80.5 H1.5" fill="none" stroke="#ACA899"/>
<rect x="2" y="106" width="21" height="21" fill="#F6F5F0"/>
<path d="M2.5 126.5 V106.5 H22.5" fill="none" stroke="#ACA899" stroke-width="1"/>
<path d="M2.5 126.5 H22.5 V106.5" fill="none" stroke="#FFFFFF" stroke-width="1"/>
<path d="M9 87 v14 l3 -3 l3 5 l2 -1 l-3 -5 h4 z" fill="#303030" stroke="#202020" stroke-width="0.8"/>
<path d="M9 110 v13 l10 -6.5 z" fill="#C8C850" stroke="#606020"/><path d="M5 113.5 h4 M5 119.5 h4 M19 116.5 h3" stroke="#404020"/>
<path d="M4 138.5 h15 M11.5 131 v15" stroke="#202020" stroke-width="1.2"/><rect x="8" y="135" width="7" height="7" fill="#2850A0"/>
<rect x="4.5" y="154.5" width="15" height="11" fill="none" stroke="#203070" stroke-dasharray="1,1"/><text x="6" y="164" font-size="9" font-family="'Liberation Sans'" fill="#2040A0" textLength="12" lengthAdjust="spacingAndGlyphs">LBL</text>
<path d="M7 175.5 h3 M11 175.5 h7 M7 179.5 h11 M7 182.5 h5 M13 182.5 h5 M7 185.5 h11 M7 189.5 h4 M12 189.5 h6" stroke="#303030" stroke-width="1"/>
<path d="M5 205.5 h14" stroke="#2050B8" stroke-width="2.5"/><path d="M9.5 198 v13 M15.5 198 v13" stroke="#203050" stroke-width="1.2"/>
<rect x="8" y="218" width="8" height="17" fill="#C8C850" stroke="#606020"/><path d="M4 221.5 h4 M16 221.5 h4 M4 231.5 h4 M16 231.5 h4" stroke="#404020"/>
<line x1="4" y1="239.5" x2="24" y2="239.5" stroke="#ACA899"/><line x1="4" y1="240.5" x2="24" y2="240.5" stroke="#FFF"/>
<path d="M8 247 h8 l2 2 l-2 2 h-8 z" fill="#C8C850" stroke="#606020"/><path d="M18 254 h-8 l-2 2 l2 2 h8 z" fill="#C8C850" stroke="#606020"/>
<path d="M9.5 267.5 L19 274 L9.5 280.5 Z" fill="none" stroke="#505030" stroke-width="1.2"/><path d="M4 271.5 h3 M4 276.5 h3 M19 274.5 h2" stroke="#505030"/>
<path d="M5 289 v16 h15" fill="none" stroke="#202020" stroke-width="1.2"/><path d="M7 297 q3 -8 6 0 q3 6 6 -4" fill="none" stroke="#3050B0" stroke-width="1.2"/><path d="M7 302 q3 -3 6 0 q3 2 6 -2" fill="none" stroke="#C04040" stroke-width="1"/>
<rect x="4.5" y="313.5" width="15" height="9" fill="#C0C0C0" stroke="#404040"/><rect x="6.5" y="315.5" width="11" height="5" fill="#E0E0E0" stroke="#606060"/><circle cx="9" cy="318" r="1.3" fill="none" stroke="#303030" stroke-width="0.8"/><circle cx="15" cy="318" r="1.3" fill="none" stroke="#303030" stroke-width="0.8"/>
<circle cx="12" cy="340.5" r="7.5" fill="#7A88A8" stroke="#404860"/><path d="M8 342 q2 -5 4 -1 q2 4 4 -1" fill="none" stroke="#1A40A0" stroke-width="1.5"/>
<text x="4" y="363" font-size="7" font-family="'Liberation Sans'" fill="#203070">V</text><path d="M5 369 l9 -7" stroke="#A0A040" stroke-width="2.5"/><path d="M14 362 q3 -3 4 1" fill="none" stroke="#303030"/>
<text x="4" y="383" font-size="7" font-family="'Liberation Sans'" fill="#203070">I</text><path d="M5 391 l9 -7" stroke="#A0A040" stroke-width="2.5"/><path d="M14 384 q3 -3 4 1" fill="none" stroke="#303030"/>
<rect x="4.5" y="400.5" width="15" height="8" fill="#F0F0F0" stroke="#303030"/><path d="M6 408 q6 -8 12 0" fill="none" stroke="#404040"/><rect x="6.5" y="408.5" width="11" height="6" fill="#B0B090" stroke="#303030"/>
<line x1="4" y1="419.5" x2="24" y2="419.5" stroke="#ACA899"/><line x1="4" y1="420.5" x2="24" y2="420.5" stroke="#FFF"/>
<line x1="4.5" y1="440" x2="19.5" y2="425.5" stroke="#383838" stroke-width="1.8"/>
<rect x="5.5" y="447.5" width="13" height="13" fill="#5AA8A8" stroke="#2A5858"/>
<circle cx="12" cy="477" r="7.5" fill="#4A9A9A" stroke="#2A5858"/>
<path d="M5.5 506 v-13.5 h5 a8 8 0 0 1 8 8 v5.5 z" fill="none" stroke="#404040" stroke-dasharray="1.5,1"/>
<ellipse cx="8.5" cy="520.5" rx="4.5" ry="6.5" fill="#4A9A9A" stroke="#2A5858"/><ellipse cx="15.5" cy="520.5" rx="4.5" ry="6" fill="#4A9A9A" stroke="#2A5858"/>
<text x="4" y="550" font-size="17" font-weight="bold" font-family="'Liberation Serif', serif" fill="#202020">A</text>
<rect x="5.5" y="557.5" width="13" height="13" fill="#2A5050" stroke="#101818"/><text x="7" y="568" font-size="11" font-weight="bold" font-family="'Liberation Sans'" fill="#A8D8D8">S</text>
<path d="M4 583.5 h15 M11.5 575 v17" stroke="#202020" stroke-width="1.2"/><rect x="8.5" y="580.5" width="6" height="6" fill="#5A9A9A" stroke="#2A5858"/></g>
<g shape-rendering="auto"><rect x="40.5" y="86.5" width="100" height="84" fill="none" stroke="#1A1A90" stroke-width="1.6"/>
<rect x="50.5" y="89.5" width="73" height="64" fill="none" stroke="#30C030" stroke-width="1.4"/>
<g fill="none" stroke="#101010" stroke-width="1.4" shape-rendering="crispEdges"><path d="M48 98 H57 M57 99.5 H67 M57 99.5 V128 H67 V99.5 M57 112.5 H64 M61.5 128 V132"/><path d="M79 95.5 H86 V97.5 H96.5 V126 H89 M88.5 97 V127 M89 112.5 H96"/><path d="M91 126 V131"/></g>
<rect x="56" y="103" width="3" height="5" fill="#101010"/>
<rect x="65" y="102" width="3" height="3" fill="#101010"/>
<rect x="65" y="106" width="3" height="2" fill="#101010"/>
<rect x="63" y="110" width="3" height="4" fill="#101010"/>
<rect x="56" y="119" width="3" height="3" fill="#101010"/>
<rect x="66" y="121" width="2" height="4" fill="#101010"/>
<rect x="87" y="104" width="3" height="3" fill="#101010"/>
<rect x="94" y="110" width="3" height="5" fill="#101010"/>
<rect x="87" y="116" width="3" height="4" fill="#101010"/>
<rect x="96" y="118" width="2" height="5" fill="#101010"/>
<rect x="51" y="96" width="3" height="2" fill="#101010"/>
<circle cx="61.5" cy="132" r="1.6" fill="#101010"/><circle cx="91" cy="131" r="1.6" fill="#101010"/>
<rect x="56.5" y="136.5" width="14" height="12" fill="none" stroke="#C4C0B4" stroke-width="1.2"/><path d="M57.0 137 l13 11 M70.0 137 l-13 11" stroke="#CCC8BC" stroke-width="0.8"/>
<rect x="84.5" y="136.5" width="14" height="12" fill="none" stroke="#C4C0B4" stroke-width="1.2"/><path d="M85.0 137 l13 11 M98.0 137 l-13 11" stroke="#CCC8BC" stroke-width="0.8"/>
<rect x="31" y="184" width="119" height="17" fill="#ECE9D8"/>
<rect x="31" y="184" width="16" height="16" fill="#ECE9D8"/>
<path d="M31.5 199.5 V184.5 H46.5" fill="none" stroke="#FFFFFF"/>
<path d="M46.5 184.5 V199.5 H31.5" fill="none" stroke="#ACA899"/>
<text x="36" y="197" font-size="12" font-family="'Liberation Sans', sans-serif" fill="#000">P</text>
<rect x="48" y="184" width="15" height="16" fill="#ECE9D8"/>
<path d="M48.5 199.5 V184.5 H62.5" fill="none" stroke="#FFFFFF"/>
<path d="M62.5 184.5 V199.5 H48.5" fill="none" stroke="#ACA899"/>
<text x="53" y="197" font-size="12" font-family="'Liberation Sans', sans-serif" fill="#000">L</text>
<rect x="64" y="184" width="86" height="16" fill="#7290DE"/>
<text x="84" y="196.5" font-size="12" font-family="'Liberation Sans', sans-serif" fill="#D4DCF2" textLength="45" lengthAdjust="spacingAndGlyphs">DEVICES</text>
<line x1="31" y1="200.5" x2="150" y2="200.5" stroke="#000" stroke-width="1"/>
<text x="33.5" y="212.0" font-size="12" font-family="'Liberation Sans', sans-serif" fill="#000" transform="translate(33.5,0) scale(0.88,1) translate(-33.5,0)">2N2222</text>
<text x="33.5" y="224.9" font-size="12" font-family="'Liberation Sans', sans-serif" fill="#000" transform="translate(33.5,0) scale(0.88,1) translate(-33.5,0)">2N2222A</text>
<text x="33.5" y="237.9" font-size="12" font-family="'Liberation Sans', sans-serif" fill="#000" transform="translate(33.5,0) scale(0.88,1) translate(-33.5,0)">2N2907</text>
<text x="33.5" y="250.8" font-size="12" font-family="'Liberation Sans', sans-serif" fill="#000" transform="translate(33.5,0) scale(0.88,1) translate(-33.5,0)">CAP</text>
<text x="33.5" y="263.8" font-size="12" font-family="'Liberation Sans', sans-serif" fill="#000" transform="translate(33.5,0) scale(0.88,1) translate(-33.5,0)">CAP-ELEC</text>
<text x="33.5" y="276.8" font-size="12" font-family="'Liberation Sans', sans-serif" fill="#000" transform="translate(33.5,0) scale(0.88,1) translate(-33.5,0)">DIODE-ZEN</text>
<text x="33.5" y="289.7" font-size="12" font-family="'Liberation Sans', sans-serif" fill="#000" transform="translate(33.5,0) scale(0.88,1) translate(-33.5,0)">REALCAP</text>
<rect x="31" y="292" width="119" height="12" fill="#316AC5"/>
<text x="33.5" y="302.6" font-size="12" font-family="'Liberation Sans', sans-serif" fill="#FFF" transform="translate(33.5,0) scale(0.88,1) translate(-33.5,0)">RES</text>
<line x1="4.5" y1="711" x2="4.5" y2="720" stroke="#ACA899"/>
<circle cx="19" cy="720" r="5.5" fill="#3A6AB8"/><circle cx="38" cy="720" r="5.5" fill="#5A88C8"/>
<rect x="53.5" y="714.5" width="26" height="8" fill="#FFF" stroke="#000"/><text x="55" y="723" font-size="9" font-family="'Liberation Sans', sans-serif">0°</text>
<line x1="83.5" y1="712" x2="83.5" y2="720" stroke="#ACA899"/>
<path d="M95 718 v3 M100 717 v4" stroke="#606060"/><path d="M113 720 l4 -4 l4 4 z" fill="#2A4A90"/>
<line x1="132.5" y1="710" x2="132.5" y2="720" stroke="#ACA899"/><line x1="138.5" y1="712" x2="138.5" y2="720" stroke="#FFF"/><line x1="139.5" y1="712" x2="139.5" y2="720" stroke="#ACA899"/>
<rect x="146.5" y="715.5" width="39" height="8" fill="#F6F5F0" stroke="#000"/>
<rect x="185.5" y="715.5" width="39" height="8" fill="#F6F5F0" stroke="#000"/>
<rect x="224.5" y="715.5" width="39" height="8" fill="#F6F5F0" stroke="#000"/>
<rect x="263.5" y="715.5" width="39" height="8" fill="#F6F5F0" stroke="#000"/>
<path d="M164 720 l3 -3 v3z" fill="#000"/><path d="M200 720 v-3 M203 720 v-3 l3 3" stroke="#000" stroke-width="1.5"/><path d="M240 720 v-3 M245 720 v-3" stroke="#000" stroke-width="2"/><path d="M279 718.5 h8" stroke="#000" stroke-width="1.5"/>
<rect x="308.5" y="714.5" width="96" height="8" fill="#ECE9D8" stroke="#ACA899"/><circle cx="318" cy="721" r="4.5" fill="#30A030"/><path d="M338 720 v-3 M343 720 v-3 M390 720 v-3" stroke="#000"/>
<line x1="415.5" y1="712" x2="415.5" y2="720" stroke="#ACA899"/><line x1="416.5" y1="712" x2="416.5" y2="720" stroke="#FFF"/>
<rect x="422.5" y="717.5" width="458" height="6" fill="#ECE9D8" stroke="#ACA899"/>
<line x1="884.5" y1="710" x2="884.5" y2="720" stroke="#ACA899"/><line x1="885.5" y1="710" x2="885.5" y2="720" stroke="#FFF"/><line x1="889.5" y1="710" x2="889.5" y2="720" stroke="#ACA899"/><line x1="890.5" y1="710" x2="890.5" y2="720" stroke="#FFF"/>
<rect x="895.5" y="717.5" width="70" height="6" fill="#ECE9D8" stroke="#ACA899"/></g>
<rect x="155.5" y="78.5" width="806" height="629" fill="none" stroke="#000" stroke-width="1"/>
</svg>
</body></html>
